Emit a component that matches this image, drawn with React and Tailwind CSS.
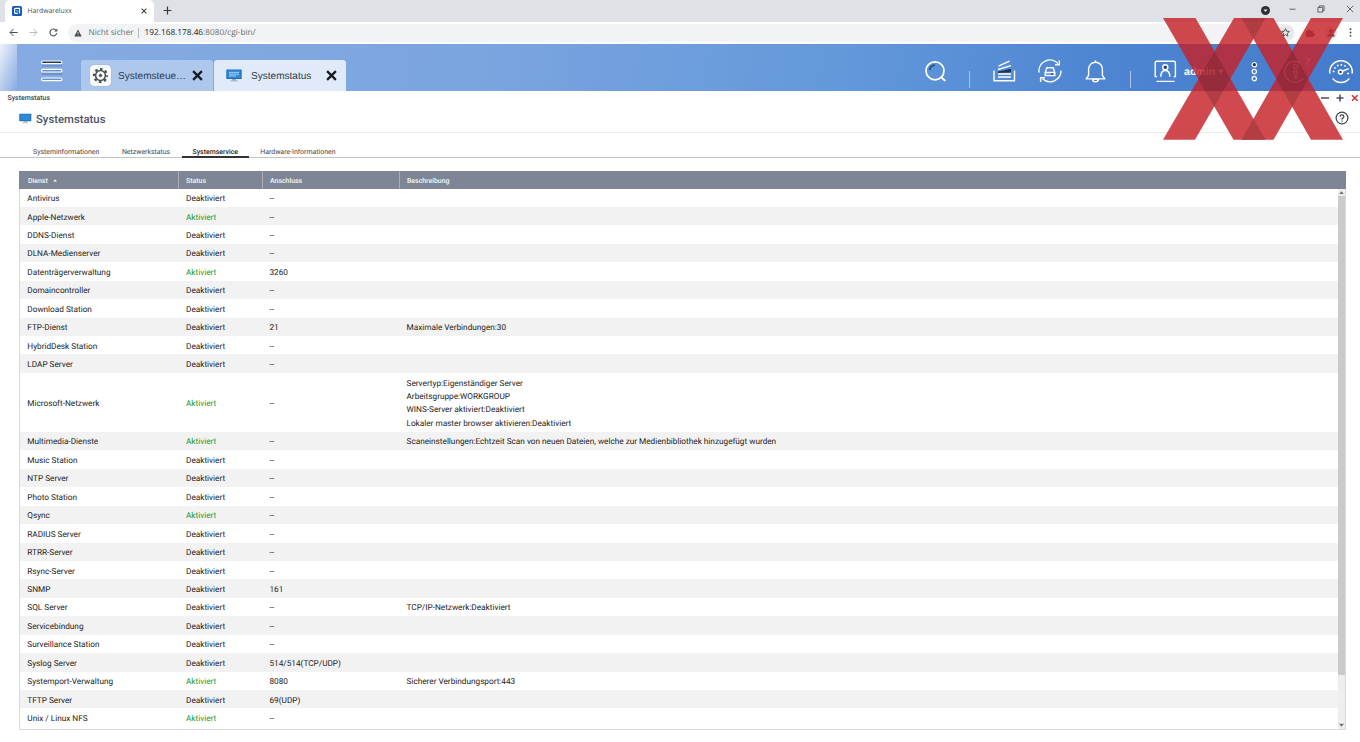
import React from 'react';

const rows = [
  ['Antivirus', 0, '--'],
  ['Apple-Netzwerk', 1, '--'],
  ['DDNS-Dienst', 0, '--'],
  ['DLNA-Medienserver', 0, '--'],
  ['Datenträgerverwaltung', 1, '3260'],
  ['Domaincontroller', 0, '--'],
  ['Download Station', 0, '--'],
  ['FTP-Dienst', 0, '21', ['Maximale Verbindungen:30']],
  ['HybridDesk Station', 0, '--'],
  ['LDAP Server', 0, '--'],
  ['Microsoft-Netzwerk', 1, '--', [
    'Servertyp:Eigenständiger Server',
    'Arbeitsgruppe:WORKGROUP',
    'WINS-Server aktiviert:Deaktiviert',
    'Lokaler master browser aktivieren:Deaktiviert',
  ]],
  ['Multimedia-Dienste', 1, '--', ['Scaneinstellungen:Echtzeit Scan von neuen Dateien, welche zur Medienbibliothek hinzugefügt wurden']],
  ['Music Station', 0, '--'],
  ['NTP Server', 0, '--'],
  ['Photo Station', 0, '--'],
  ['Qsync', 1, '--'],
  ['RADIUS Server', 0, '--'],
  ['RTRR-Server', 0, '--'],
  ['Rsync-Server', 0, '--'],
  ['SNMP', 0, '161'],
  ['SQL Server', 0, '--', ['TCP/IP-Netzwerk:Deaktiviert']],
  ['Servicebindung', 0, '--'],
  ['Surveillance Station', 0, '--'],
  ['Syslog Server', 0, '514/514(TCP/UDP)'],
  ['Systemport-Verwaltung', 1, '8080', ['Sicherer Verbindungsport:443']],
  ['TFTP Server', 0, '69(UDP)'],
  ['Unix / Linux NFS', 1, '--'],
];

const Cross = ({ className, w = 2, color = '#151a22' }) => (
  <svg className={className} viewBox="0 0 10 10" fill="none" stroke={color} strokeWidth={w}>
    <path d="M1 1l8 8M9 1l-8 8" />
  </svg>
);

const Monitor = ({ className, lines }) => (
  <svg className={className} viewBox="0 0 16 13">
    <rect x="0.3" y="0.4" width="15.4" height="9.6" rx="0.6" fill="#1f6fbd" />
    <rect x="1.5" y="1.4" width="13" height="7.4" fill="#3388d4" />
    {lines && <path d="M3 3.4h10M3 5.2h10M3 7h7" stroke="#bfe0fa" strokeWidth="0.8" />}
    <path d="M6.3 10h3.4l.4 1.4H5.9z" fill="#8fa3b5" />
    <path d="M4.3 11.9h7.4" stroke="#a4b2c0" strokeWidth="1" />
  </svg>
);

function BrowserChrome() {
  return (
    <>
      <div className="flex h-[21.5px] bg-[#dee1e6]">
        <div className="ml-[5px] flex h-[22px] w-[149px] items-center rounded-t-[5px] bg-white pl-[7px] pr-[7px]">
          <svg className="h-[10px] w-[10px]" viewBox="0 0 10 10">
            <rect width="10" height="10" rx="1.6" fill="#1459b8" />
            <path d="M7.5 7.5V2.4H3.6Q2.6 2.4 2.6 3.4v3q0 1 1 1h2.2" fill="none" stroke="#fff" strokeWidth="1.2" />
            <rect x="4.2" y="4" width="2.2" height="2" fill="#3f9be8" />
          </svg>
          <span className="ml-[5.5px] flex-1 text-[6.8px] leading-[10px] text-[#4a4d51]">Hardwareluxx</span>
          <Cross className="h-[6px] w-[6px]" w={1.7} color="#3c4043" />
        </div>
        <svg className="ml-[9px] mt-[6px] h-[9px] w-[9px]" viewBox="0 0 9 9">
          <path d="M4.5 .6v7.8M.6 4.5h7.8" stroke="#34373b" strokeWidth="1.2" />
        </svg>
        <svg className="ml-auto mr-[19px] mt-[6px] h-[9px] w-[9px]" viewBox="0 0 9 9">
          <circle cx="4.5" cy="4.5" r="4.5" fill="#2d3035" />
          <path d="M2.5 3.6h4L4.5 6.1z" fill="#e6e8eb" />
        </svg>
        <svg className="mr-[21px] mt-[5px] h-[9px] w-[7px]" viewBox="0 0 7 9"><path d="M.5 4.2h6" stroke="#55585c" strokeWidth=".9" /></svg>
        <svg className="mr-[21px] mt-[5px] h-[8px] w-[8px]" viewBox="0 0 8 8" fill="none" stroke="#44474b" strokeWidth=".8">
          <path d="M.9 2.4h4.8v4.7H.9zM2.3 2.4V.9h4.8v4.7H5.7" />
        </svg>
        <Cross className="mr-[6px] mt-[5px] h-[8px] w-[8px]" w={1} color="#44474b" />
      </div>
      <div className="flex h-[22.5px] items-center bg-white">
        <svg className="ml-[9px] h-[9px] w-[9px]" viewBox="0 0 9 9" fill="none" stroke="#4b4e53" strokeWidth="1"><path d="M8.6 4.5H1M4.5 1L1 4.5 4.5 8" /></svg>
        <svg className="ml-[11px] h-[9px] w-[9px]" viewBox="0 0 9 9" fill="none" stroke="#b9bbbe" strokeWidth="1"><path d="M.4 4.5H8M4.5 1L8 4.5 4.5 8" /></svg>
        <svg className="ml-[11px] h-[9px] w-[9px]" viewBox="0 0 9 9" fill="none" stroke="#4b4e53" strokeWidth="1.1">
          <path d="M7.7 5.2A3.4 3.4 0 1 1 7 2.3" /><path d="M8.3.5v3H5.3z" fill="#4b4e53" stroke="none" />
        </svg>
        <div className="ml-[10px] flex h-[17.5px] w-[1227px] items-center rounded-full bg-[#f1f3f4] pl-[6px] text-[8.2px] leading-[12px] text-[#696d72]">
          <svg className="h-[8px] w-[8px]" viewBox="0 0 8 8"><path d="M4 .6L7.7 7.4H.3z" fill="#44474c" /><path d="M4 3v2.2M4 5.8v.8" stroke="#fff" strokeWidth=".7" /></svg>
          <span className="ml-[6.5px]">Nicht sicher</span>
          <span className="ml-[4.5px] h-[10px] w-px bg-[#b5b8bb]" />
          <span className="ml-[5.5px] text-[8.28px]"><span className="text-[#26282b]">192.168.178.46</span>:8080/cgi-bin/</span>
          <div className="ml-auto mr-[1.5px] flex h-[16px] w-[16px] items-center justify-center rounded-full bg-[#e6e8ea]">
            <svg className="h-[9px] w-[9px]" viewBox="0 0 10 10"><path d="M5 .8l1.3 2.8 3 .3L7 6l.7 3L5 7.4 2.3 9 3 6 .7 3.9l3-.3z" fill="none" stroke="#3f4246" strokeWidth="1" /></svg>
          </div>
        </div>
        <svg className="ml-[10px] h-[10px] w-[10px]" viewBox="0 0 10 10"><path d="M1 3h2.2a1.4 1.4 0 1 1 2.8 0H8v2.2a1.4 1.4 0 1 1 0 2.6V9H1z" fill="#5f6368" /></svg>
        <svg className="ml-[10px] h-[12px] w-[12px]" viewBox="0 0 12 12"><circle cx="6" cy="6" r="6" fill="#dcdfe3" /><circle cx="6" cy="4.3" r="1.9" fill="#4c5b70" /><path d="M2.3 9.5q0-2.7 3.7-2.7t3.7 2.7z" fill="#4c5b70" /></svg>
        <svg className="ml-[12px] h-[9px] w-[3px]" viewBox="0 0 3 9" fill="#3c4043"><circle cx="1.5" cy="1.2" r=".9" /><circle cx="1.5" cy="4.5" r=".9" /><circle cx="1.5" cy="7.8" r=".9" /></svg>
      </div>
    </>
  );
}

function AppBar() {
  return (
    <div className="flex h-[46.5px] bg-[linear-gradient(100deg,#86abe2_0%,#7ba5df_35%,#6398da_62%,#4f86d2_80%,#447bcb_100%)] font-['Liberation_Sans',sans-serif]">
      <div className="w-[17px] bg-linear-to-br from-[#eef3fb] via-[#b9cdec] to-[#88abe1]" />
      <svg className="ml-[22.5px] mt-[15px] h-[24px] w-[24px]" viewBox="0 0 24 24">
        <path d="M2 6.5h20M2 15h20" stroke="#5d80b4" strokeWidth="2.2" opacity=".55" />
        <g fill="#6c8fc4" stroke="#fff" strokeWidth="1.1">
          <rect x="1.5" y="2" width="20.5" height="2.6" rx="1.3" fill="#253a57" />
          <rect x="1.5" y="10.4" width="20.5" height="2.6" rx="1.3" />
          <rect x="1.5" y="19" width="20.5" height="2.6" rx="1.3" />
        </g>
      </svg>
      <div className="ml-[17.5px] mt-[16px] flex w-[132px] items-center rounded-t-[3px] bg-[#aec8ed] pl-[9px] pr-[10px] text-[10.05px] leading-[14px] text-[#2d3a4f]">
        <div className="flex h-[21px] w-[21px] items-center justify-center rounded-[4px] bg-[#f8f9fb] shadow-[0_0_1px_#5f7391]">
          <svg className="h-[17px] w-[17px]" viewBox="0 0 17 17" fill="none" stroke="#4b4f55">
            <circle cx="8.5" cy="8.5" r="6.5" strokeWidth="2.2" strokeDasharray="2.5 2.605" strokeDashoffset="1.25" />
            <circle cx="8.5" cy="8.5" r="4.9" strokeWidth="1.5" />
            <circle cx="8.5" cy="8.5" r="1.2" fill="#4b4f55" strokeWidth="1" />
          </svg>
        </div>
        <span className="ml-[7px] flex-1 whitespace-nowrap pt-[2.5px]">Systemsteue…</span>
        <Cross className="h-[11px] w-[11px]" />
      </div>
      <div className="ml-px mt-[16px] flex w-[132px] items-center rounded-t-[3px] bg-[#e1eaf8] pl-[11.5px] pr-[9.5px] text-[10.05px] leading-[14px] text-[#2d3a4f]">
        <Monitor className="h-[13px] w-[16px]" lines />
        <span className="ml-[9.5px] flex-1 pt-[2.5px]">Systemstatus</span>
        <Cross className="h-[11px] w-[11px]" />
      </div>
      <div className="ml-auto flex pr-[5px] pt-[14px]">
        <svg className="h-[26px] w-[24px]" viewBox="0 0 24 26" fill="none" stroke="#fff">
          <circle cx="11" cy="12.8" r="9" strokeWidth="1.7" /><path d="M5.8 12a5.2 5.2 0 0 1 5-4.9" stroke="#26466f" strokeWidth="1.6" /><path d="M17 19l4.4 4" strokeWidth="1.8" />
        </svg>
        <div className="ml-[21px] mt-[13px] h-[17px] w-px bg-[#a9c6ee]" />
        <svg className="ml-[22px] h-[26px] w-[24px]" viewBox="0 0 24 26" fill="none" stroke="#fff" strokeWidth="1.4">
          <path d="M2 12.5v10.3h20.5V12.5" /><path d="M6.5 8.2L17.5 3.2" /><path d="M6 11.5l13-3.8" /><path d="M6 14.2l12.5-2.9v2.7z" fill="#1d3553" stroke="#1d3553" strokeWidth="1" /><path d="M6 16h13M6 19h13" />
        </svg>
        <svg className="ml-[21px] h-[26px] w-[26px]" viewBox="0 0 26 26" fill="none" stroke="#fff" strokeWidth="1.4">
          <path d="M2 14.5A11 11 0 0 1 21 5.6M24 12.5A11 11 0 0 1 5.5 20.8" /><path d="M22.3 2.5v4.3h-4.3M3.6 24v-4.2h4.3" /><path d="M9.8 9.7h6.4l1.6 4.8v3H8.2v-3zM8.2 14.5h9.6" /><path d="M14 16.1h2" stroke="#26466f" />
        </svg>
        <svg className="ml-[21px] h-[26px] w-[24px]" viewBox="0 0 24 26" fill="none" stroke="#fff" strokeWidth="1.4">
          <path d="M11.5 2.4v1.7M4.6 17.5V11a6.9 6.8 0 0 1 13.8 0v6.5l2.4 3.4H2.2z" strokeLinejoin="round" /><path d="M8.6 21.5a2.9 2.2 0 0 0 5.8 0z" fill="#26466f" />
        </svg>
        <div className="ml-[22px] mt-[13px] h-[17px] w-px bg-[#a9c6ee]" />
        <svg className="ml-[22px] h-[26px] w-[24px]" viewBox="0 0 24 26" fill="none" stroke="#fff" strokeWidth="1.4">
          <path d="M4 18.6H2.2V4.8q0-1.5 1.5-1.5h17.2q1.5 0 1.5 1.5v13.8h-1.8M3.5 23.4h18" /><circle cx="12.3" cy="9.3" r="2.5" fill="#26466f" /><path d="M7.8 18.8q0-6.3 4.5-6.3t4.5 6.3" />
        </svg>
        <span className="ml-[7px] mt-[7.5px] w-[33px] text-[10.6px] font-bold leading-[13px] text-white">admin</span>
        <svg className="mt-[11px] h-[6px] w-[8px]" viewBox="0 0 8 6"><path d="M1.4 .6h5L3.9 5z" fill="#fff" /></svg>
        <svg className="ml-[25px] h-[26px] w-[8px]" viewBox="0 0 8 26" fill="none" stroke="#fff" strokeWidth="1.2">
          <circle cx="4.3" cy="6.7" r="2.2" fill="#1d3553" /><circle cx="4.3" cy="13.6" r="2.2" /><circle cx="4.3" cy="20.6" r="2.2" />
        </svg>
        <svg className="ml-[25px] h-[26px] w-[22px]" viewBox="0 0 22 26" fill="none" stroke="#fff" strokeWidth="1.3" opacity=".75">
          <path d="M17 4.5A10.5 10.5 0 1 0 20.5 20" /><circle cx="12.7" cy="8.3" r="2" /><path d="M10.5 13h3.6v7.4h-2.3v-5.8h-1.3z" />
        </svg>
        <span className="-mt-px w-[6px] text-[10px] font-bold leading-[12px] text-white/60">7</span>
        <svg className="ml-[16px] h-[26px] w-[28px]" viewBox="0 0 28 26" fill="none" stroke="#fff" strokeWidth="1.5">
          <path d="M2.8 15.5A11.3 11.3 0 1 1 25.2 15.5M5.6 20.5q3.5 4 8.4 4t8.4-4" /><path d="M6.6 14.2a7.5 7.5 0 0 1 13-5" strokeDasharray="1.5 2.2" strokeWidth="1.7" /><circle cx="13.5" cy="14" r="2" fill="#26466f" /><path d="M15.3 13.3l6.3-2.7M20 15.5h2" />
        </svg>
      </div>
    </div>
  );
}

function Watermark() {
  return (
    <svg className="pointer-events-none absolute left-[1162px] top-[18px] h-[122px] w-[182px]" viewBox="0 0 182 122">
      <g opacity=".82" fill="#c62229">
        <path d="M1 0h32.500l70 121.700H71.500z" />
        <path d="M72 0h31.500L33 121.700H1z" />
        <path d="M79.500 0h32l69.500 121.700h-32z" />
        <path d="M149 0h32l-69.500 121.700h-32z" />
      </g>
      <g fill="#000" opacity=".14">
        <path d="M52.600 33.400L68.300 60.800 52.200 88.700 36.400 61.300z" />
        <path d="M130.300 32.700L146.300 60.800 130.300 89 114.200 60.800z" />
        <path d="M79.500 0H103.500L91.500 21z" />
        <path d="M91.500 100.700L103.500 121.700H79.500z" />
      </g>
    </svg>
  );
}

const tabs = ['Systeminformationen', 'Netzwerkstatus', 'Systemservice', 'Hardware-Informationen'];

export default function App() {
  return (
    <div className="relative h-[742px] w-[1360px] overflow-hidden bg-white font-['Open_Sans',sans-serif] [text-rendering:geometricPrecision]">
      <BrowserChrome />
      <AppBar />
      <div className="font-['Roboto',sans-serif] text-[#222]">
        <div className="flex h-[14.5px] items-center pl-[7.5px] pr-px text-[6.93px] font-medium leading-[10px] text-[#3a3f48]">
          <span className="flex-1">Systemstatus</span>
          <svg className="h-[8px] w-[38px]" viewBox="0 0 38 8" fill="none" strokeWidth="1.5">
            <path d="M0 4h8M15.5 4h7M19 .5v7" stroke="#454c58" /><path d="M31 1.2l5.6 5.6M36.6 1.2L31 6.8" stroke="#d22f35" />
          </svg>
        </div>
        <div className="flex h-[27.5px] items-center border-b border-[#ececec] pl-[19px] pr-[11px]">
          <Monitor className="h-[11px] w-[12.5px]" />
          <h1 className="ml-[4.5px] flex-1 pt-px text-[11.32px] font-medium leading-[14px] text-[#4a5368]">Systemstatus</h1>
          <svg className="h-[14px] w-[14px]" viewBox="0 0 14 14" fill="none" stroke="#3d434d" strokeWidth="1.2">
            <circle cx="7" cy="7" r="5.9" /><path d="M5.1 5.7q0-1.9 1.9-1.9t1.9 1.7q0 1-1.1 1.6T7 8.6M7 9.5v1.2" />
          </svg>
        </div>
        <div className="flex h-[25px] items-end border-b border-[#c4c4c4] pl-[21.8px] text-[6.93px] leading-[10px] text-[#454545]">
          {tabs.map((t, i) => (
            <div key={t} className={i === 2 ? '-mb-px h-[11px] border-b-2 border-[#333] px-[11px] font-medium text-[#1d1d1d]' : 'h-[10px] px-[11.3px]'}>{t}</div>
          ))}
        </div>
        <div className="ml-[19px] mt-[13.5px] h-[558.5px] w-[1327px] border border-t-0 border-[#d9d9d9]">
          <div className="-mx-px grid h-[17.5px] grid-cols-[159.5px_84px_137px_1fr] items-stretch bg-[#7e8696] text-[6.93px] font-medium leading-[20px] text-[#f5f6f8]">
            <div className="flex border-r border-[#a7adb9] pl-[9px]"><span>Dienst</span><svg className="ml-[5px] mt-[7.5px] h-[3px] w-[4px]" viewBox="0 0 4 3"><path d="M0 2.6L2 .4l2 2.2z" fill="#fff" /></svg></div>
            <div className="border-r border-[#a7adb9] pl-[7.5px]">Status</div>
            <div className="border-r border-[#a7adb9] pl-[7.5px]">Anschluss</div>
            <div className="pl-[7.5px]">Beschreibung</div>
          </div>
          <div className="flex h-[540px]">
            <div className="flex-1 text-[8.225px] leading-[13.45px]">
              {rows.map(([name, on, port, desc], i) => (
                <div key={name} className={`grid grid-cols-[158.5px_84px_137px_1fr] items-center pt-[4.2px] ${desc && desc.length > 1 ? 'h-[59px]' : 'h-[18.45px]'} ${i % 2 ? 'bg-[#f2f2f2]' : 'bg-white'}`}>
                  <div className="pl-[7.3px]">{name}</div>
                  <div className={on ? 'pl-[7.5px] text-[#1a9c33]' : 'pl-[7.5px]'}>{on ? 'Aktiviert' : 'Deaktiviert'}</div>
                  <div className="pl-[7px]">{port}</div>
                  <div className="pl-[7px]">{desc && desc.map((d) => <div key={d}>{d}</div>)}</div>
                </div>
              ))}
            </div>
            <div className="flex w-[7.5px] flex-col items-center bg-[#eeeeee]">
              <svg className="h-[7px] w-[7px]" viewBox="0 0 7 7"><path d="M1.2 5L3.5 2.2 5.8 5z" fill="#707070" /></svg>
              <div className="h-[479px] w-full bg-[#cacaca]" />
              <svg className="mt-auto h-[8px] w-[7px]" viewBox="0 0 7 8"><path d="M1 2.8h5L3.5 5.8z" fill="#707070" /></svg>
            </div>
          </div>
        </div>
      </div>
      <Watermark />
    </div>
  );
}
